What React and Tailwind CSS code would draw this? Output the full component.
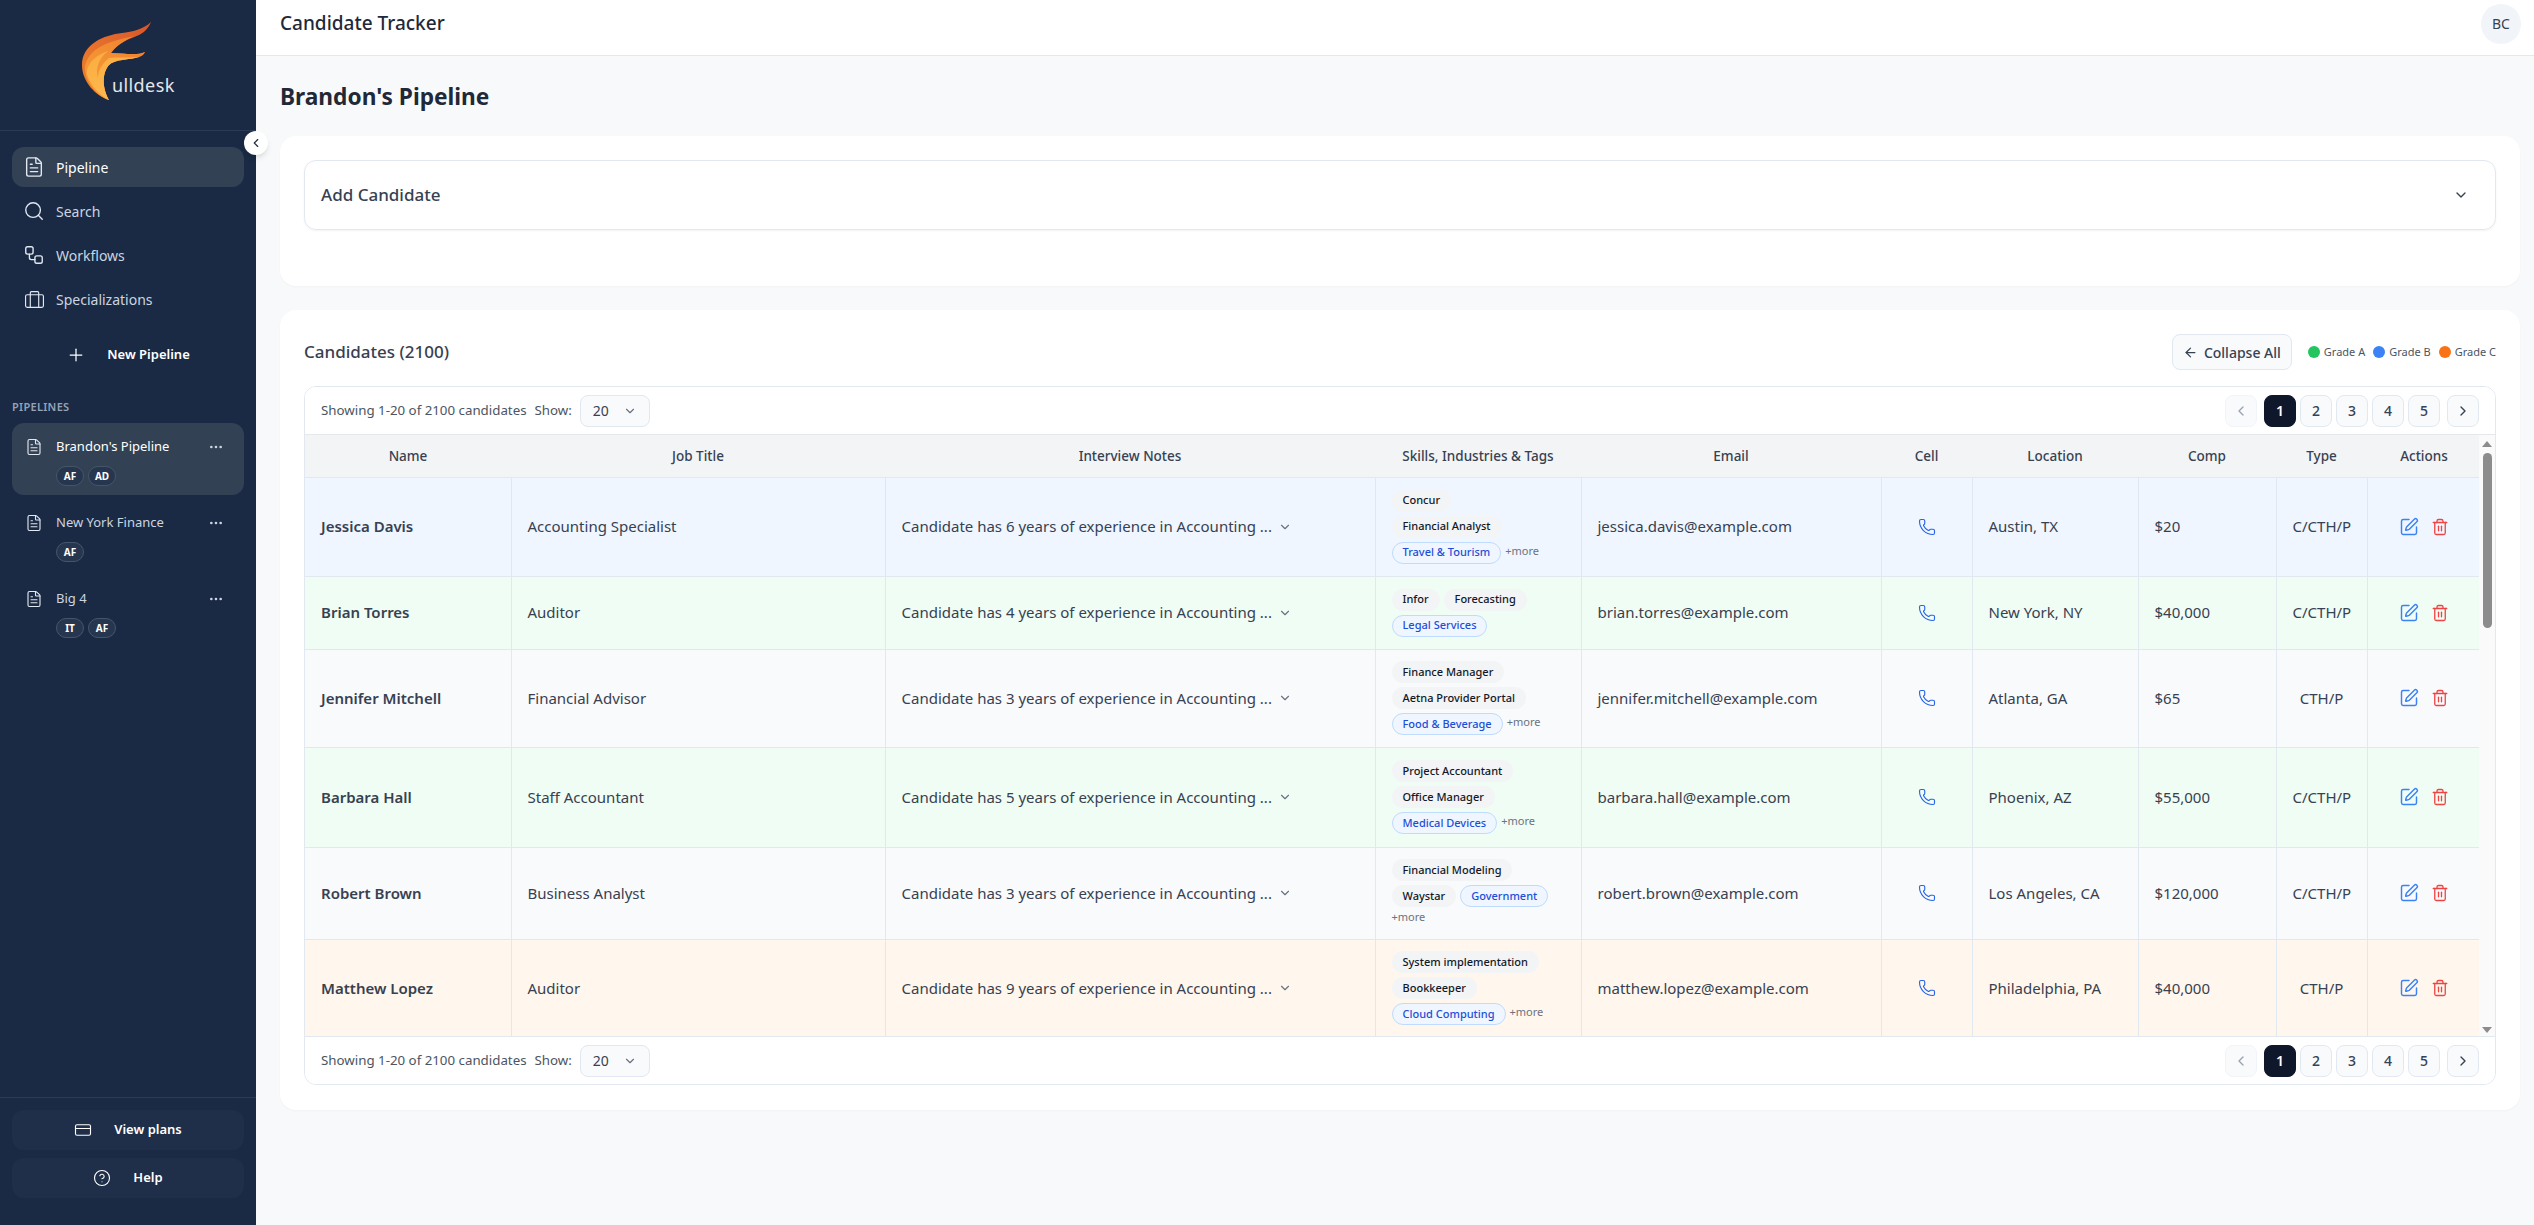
import { ArrowLeft, ChevronDown, ChevronLeft, ChevronRight, CircleHelp, CreditCard, FileText, MoreHorizontal, Phone, Plus, Search, SquarePen, Trash2, Workflow } from 'lucide-react';

const FONT = 'font-["Noto_Sans","Open_Sans",sans-serif]';

const COLUMNS = [
    ['Name', 'w-[206px]'],
    ['Job Title', 'w-[374px]'],
    ['Interview Notes', 'w-[490px]'],
    ['Skills, Industries & Tags', 'w-[206px]'],
    ['Email', 'w-[300px]'],
    ['Cell', 'w-[91px]'],
    ['Location', 'w-[166px]'],
    ['Comp', 'w-[138px]'],
    ['Type', 'w-[91px]'],
    ['Actions', 'w-[114px]'],
];

const ROWS = [
    { name: 'Jessica Davis', title: 'Accounting Specialist', years: 6, skills: ['Concur', 'Financial Analyst'], industry: 'Travel & Tourism', more: true, email: 'jessica.davis@example.com', location: 'Austin, TX', comp: '$20', type: 'C/CTH/P', bg: 'bg-[#eff6ff]', h: 'h-[99px]' },
    { name: 'Brian Torres', title: 'Auditor', years: 4, skills: ['Infor', 'Forecasting'], industry: 'Legal Services', email: 'brian.torres@example.com', location: 'New York, NY', comp: '$40,000', type: 'C/CTH/P', bg: 'bg-[#f0fdf4]', h: 'h-[73px]' },
    { name: 'Jennifer Mitchell', title: 'Financial Advisor', years: 3, skills: ['Finance Manager', 'Aetna Provider Portal'], industry: 'Food & Beverage', more: true, email: 'jennifer.mitchell@example.com', location: 'Atlanta, GA', comp: '$65', type: 'CTH/P', bg: 'bg-[#f9fafc]', h: 'h-[98px]' },
    { name: 'Barbara Hall', title: 'Staff Accountant', years: 5, skills: ['Project Accountant', 'Office Manager'], industry: 'Medical Devices', more: true, email: 'barbara.hall@example.com', location: 'Phoenix, AZ', comp: '$55,000', type: 'C/CTH/P', bg: 'bg-[#f0fdf4]', h: 'h-[100px]' },
    { name: 'Robert Brown', title: 'Business Analyst', years: 3, skills: ['Financial Modeling', 'Waystar'], industry: 'Government', more: true, email: 'robert.brown@example.com', location: 'Los Angeles, CA', comp: '$120,000', type: 'C/CTH/P', bg: 'bg-[#f9fafc]', h: 'h-[92px]' },
    { name: 'Matthew Lopez', title: 'Auditor', years: 9, skills: ['System implementation', 'Bookkeeper'], industry: 'Cloud Computing', more: true, email: 'matthew.lopez@example.com', location: 'Philadelphia, PA', comp: '$40,000', type: 'CTH/P', bg: 'bg-[#fff7ed]', h: 'h-[98px]' },
];

const PIPELINES = [
    { name: "Brandon's Pipeline", tags: ['AF', 'AD'], active: true },
    { name: 'New York Finance', tags: ['AF'] },
    { name: 'Big 4', tags: ['IT', 'AF'] },
];

// ── Logo flame, the rest of the word is real text ───────────────
function Logo() {
    return (
        <div className="relative w-[92px] h-[78px]">
            <svg viewBox="0 0 70 78" className="w-[70px] h-[78px]">
                <defs>
                    <linearGradient id="flameBack" x1="0" y1="0.6" x2="1" y2="0">
                        <stop offset="0" stopColor="#ea7a2c" />
                        <stop offset="1" stopColor="#d9552c" />
                    </linearGradient>
                    <linearGradient id="flameMid" x1="0" y1="1" x2="1" y2="0">
                        <stop offset="0" stopColor="#f7a037" />
                        <stop offset="1" stopColor="#ee7f30" />
                    </linearGradient>
                    <linearGradient id="flameFront" x1="0" y1="0" x2="0.5" y2="1">
                        <stop offset="0" stopColor="#fbab3f" />
                        <stop offset="1" stopColor="#fdbb50" />
                    </linearGradient>
                </defs>
                <path fill="url(#flameBack)" d="M69 0C62 7 50 10 40 11 22 13 0 22 0 43 0 60 14 74 27 78 21 68 19 52 27 43 33 37 47 38 57 35 60 34 62 32 63 30 54 34 42 31 29 31 36 20 48 17 57 13 63 10 67 5 69 0Z" />
                <path fill="url(#flameMid)" d="M52 14C36 18 8 22 3 44 2 58 14 74 27 78 21 68 19 52 27 43 33 37 47 38 57 35 60 34 62 32 63 30 54 34 42 31 29 31 36 22 44 18 52 14Z" />
                <path fill="url(#flameFront)" d="M26 29C14 33 4 42 5 52 8 64 19 74 27 78 21 68 19 52 27 43 33 37 47 38 57 35 48 36 34 35 27 36 22 40 16 47 16 56 13 46 17 36 26 29Z" />
            </svg>
            <span className="absolute left-[30px] bottom-[3px] text-[18px] leading-6 font-normal tracking-[0.4px] text-[#e5e7eb]">ulldesk</span>
        </div>
    );
}

function SpecializationsIcon() {
    return (
        <svg viewBox="0 0 20 20" fill="none" stroke="currentColor" strokeWidth="1.1" strokeLinejoin="round" className="w-[21px] h-[21px] shrink-0">
            <rect x="1.5" y="5.5" width="17" height="12" rx="1.5" />
            <path d="M6 17.5V3.5a1 1 0 0 1 1-1h6a1 1 0 0 1 1 1v14" />
        </svg>
    );
}

function NavItem({ icon, label, active }) {
    return (
        <div className={`flex items-center gap-3 h-10 px-3 rounded-xl text-[14px] ${active ? 'bg-[#334155] text-white' : 'text-[#cbd5e1]'}`}>
            <span className="w-5 flex justify-center text-[#e2e8f0]">{icon}</span>
            {label}
        </div>
    );
}

function PipelineItem({ pipeline }) {
    return (
        <div className={`h-[72px] px-3 pt-3 rounded-xl ${pipeline.active ? 'bg-[#334155]' : ''}`}>
            <div className="flex items-center h-6">
                <span className="w-[18px] ml-[1px] mr-[13px] text-[#e2e8f0]"><FileText size={18} strokeWidth={1.5} /></span>
                <span className={`flex-1 text-[13px] ${pipeline.active ? 'text-white' : 'text-[#cbd5e1]'}`}>{pipeline.name}</span>
                <MoreHorizontal size={16} className="text-[#cbd5e1] mr-2" />
            </div>
            <div className="flex gap-1 mt-[7px] ml-8">
                {pipeline.tags.map(t => (
                    <span key={t} className="w-7 h-5 flex items-center justify-center rounded-full border border-[#475569] bg-[#27364f] text-[10px] font-bold text-white">{t}</span>
                ))}
            </div>
        </div>
    );
}

function Sidebar() {
    return (
        <aside className="relative w-64 h-screen shrink-0 flex flex-col bg-[#1a2a44]">
            <div className="h-[131px] flex items-start justify-center pt-[22px] border-b border-[#2b3b55]">
                <Logo />
            </div>
            <button className="absolute left-[244px] top-[131px] w-6 h-6 rounded-full bg-white shadow-md flex items-center justify-center text-[#1f2937]">
                <ChevronLeft size={14} />
            </button>
            <nav className="px-3 pt-4 flex flex-col gap-1">
                <NavItem active icon={<FileText size={22} strokeWidth={1.5} className="shrink-0" />} label="Pipeline" />
                <NavItem icon={<Search size={22} strokeWidth={1.5} className="shrink-0" />} label="Search" />
                <NavItem icon={<Workflow size={22} strokeWidth={1.5} className="shrink-0" />} label="Workflows" />
                <NavItem icon={<SpecializationsIcon />} label="Specializations" />
            </nav>
            <div className="mt-4 mx-3 h-10 flex items-center justify-center gap-[21px] text-[13px] font-semibold text-white">
                <Plus size={20} strokeWidth={1.5} />
                New Pipeline
            </div>
            <div className="mt-[24px] px-3 h-[16px] leading-4 text-[11px] font-semibold tracking-[0.3px] text-[#94a3b8]">PIPELINES</div>
            <div className="mt-2 px-3 flex flex-col gap-1">
                {PIPELINES.map(p => <PipelineItem key={p.name} pipeline={p} />)}
            </div>
            <div className="mt-auto border-t border-[#2b3b55] px-3 pt-3 pb-[27px] flex flex-col gap-2">
                <div className="h-10 rounded-xl bg-[#1f2e49] flex items-center justify-center gap-[22px] text-[13px] font-semibold text-white">
                    <CreditCard size={18} strokeWidth={1.5} /> View plans
                </div>
                <div className="h-10 rounded-xl bg-[#1f2e49] flex items-center justify-center gap-[22px] text-[13px] font-semibold text-white">
                    <CircleHelp size={18} strokeWidth={1.5} /> Help
                </div>
            </div>
        </aside>
    );
}

function PageButton({ children, active, disabled, className = '' }) {
    const look = active
        ? 'bg-[#0f172a] text-white border-[#0f172a] font-semibold'
        : disabled
            ? 'bg-[#f9fafb] border-[#f1f5f9] text-[#9ca3af]'
            : 'bg-[#f8fafc] border-[#e2e8f0] text-[#374151] font-medium';
    return <button className={`w-8 h-8 rounded-lg border flex items-center justify-center text-[14px] ${look} ${className}`}>{children}</button>;
}

function Toolbar({ border }) {
    return (
        <div className={`h-12 flex items-center justify-between px-4 bg-white ${border}`}>
            <div className="flex items-center text-[13.3px] text-[#4b5563]">
                <span>Showing 1-20 of 2100 candidates</span>
                <span className="ml-2">Show:</span>
                <div className="ml-2 w-[70px] h-8 rounded-lg border border-[#e2e8f0] bg-[#f8fafc] flex items-center justify-between pl-3 pr-3 text-[14px] text-[#374151]">
                    20 <ChevronDown size={14} className="text-[#6b7280]" />
                </div>
            </div>
            <div className="flex items-center">
                <PageButton disabled className="mr-[7px]"><ChevronLeft size={16} /></PageButton>
                <div className="flex gap-1">
                    <PageButton active>1</PageButton>
                    <PageButton>2</PageButton>
                    <PageButton>3</PageButton>
                    <PageButton>4</PageButton>
                    <PageButton>5</PageButton>
                </div>
                <PageButton className="ml-[7px]"><ChevronRight size={16} /></PageButton>
            </div>
        </div>
    );
}

function Tag({ children, blue }) {
    return (
        <span className={`h-[22px] px-2.5 flex items-center rounded-full border whitespace-nowrap text-[11px] font-medium ${blue ? 'bg-[#eff6ff] border-[#bfdbfe] text-[#1d4ed8]' : 'bg-[#f3f4f6] border-transparent text-[#111827]'}`}>{children}</span>
    );
}

function CandidateRow({ row }) {
    const cell = `border-r border-[#e2e8f0] px-4 ${row.h}`;
    return (
        <tr className={`${row.bg} border-b border-[#e2e8f0] text-[15px] text-[#374151]`}>
            <td className={`${cell} font-semibold`}>{row.name}</td>
            <td className={cell}>{row.title}</td>
            <td className={cell}>
                <div className="flex items-center gap-1.5">
                    <span className="whitespace-nowrap">Candidate has {row.years} years of experience in Accounting ...</span>
                    <ChevronDown size={14} className="text-[#6b7280] shrink-0" />
                </div>
            </td>
            <td className={`${cell} py-0`}>
                <div className="flex flex-wrap gap-x-1 gap-y-1 items-center">
                    {row.skills.map(s => <Tag key={s}>{s}</Tag>)}
                    <Tag blue>{row.industry}</Tag>
                    {row.more && <span className="text-[11px] leading-3 pb-1 text-[#6b7280]">+more</span>}
                </div>
            </td>
            <td className={cell}>{row.email}</td>
            <td className={cell}><Phone size={18} strokeWidth={1.5} className="mx-auto text-[#2563eb]" /></td>
            <td className={cell}>{row.location}</td>
            <td className={cell}>{row.comp}</td>
            <td className={`${cell} text-center`}>{row.type}</td>
            <td className={`${row.h} px-4`}>
                <div className="flex items-center justify-center gap-3">
                    <SquarePen size={20} strokeWidth={1.75} className="text-[#3b82f6]" />
                    <Trash2 size={18} strokeWidth={1.75} className="text-[#ef4444]" />
                </div>
            </td>
        </tr>
    );
}

function Scrollbar() {
    return (
        <div className="w-4 flex flex-col items-center bg-[#fafafa]">
            <div className="mt-[6px] w-0 h-0 border-x-[5px] border-x-transparent border-b-[6px] border-b-[#8c8c8c]" />
            <div className="mt-[6px] w-[9px] h-[175px] rounded-full bg-[#8c8c8c]" />
            <div className="mt-auto mb-[3px] w-0 h-0 border-x-[5px] border-x-transparent border-t-[6px] border-t-[#8c8c8c]" />
        </div>
    );
}

function Legend({ dot, label }) {
    return (
        <span className="flex items-center gap-1 text-[11px] text-[#4b5563]">
            <span className={`w-3 h-3 rounded-full ${dot}`} />{label}
        </span>
    );
}

function CandidateTable() {
    return (
        <div className="rounded-xl border border-[#e2e8f0] overflow-hidden bg-white">
            <Toolbar border="border-b border-[#e5e7eb]" />
            <div className="flex">
                <div className="w-[2174px] h-[601px] overflow-hidden">
                    <table className="table-fixed w-[2176px] border-collapse">
                        <colgroup>{COLUMNS.map(([name, w]) => <col key={name} className={w} />)}</colgroup>
                        <thead>
                            <tr className="h-[42px] bg-[#f3f4f6] border-b border-[#e2e8f0]">
                                {COLUMNS.map(([name]) => <th key={name} className="px-4 text-center text-[13.5px] font-medium text-[#374151]">{name}</th>)}
                            </tr>
                        </thead>
                        <tbody>{ROWS.map(r => <CandidateRow key={r.name} row={r} />)}</tbody>
                    </table>
                </div>
                <Scrollbar />
            </div>
            <Toolbar border="border-t border-[#e2e8f0]" />
        </div>
    );
}

export default function App() {
    return (
        <div className={`flex h-screen overflow-hidden bg-[#f8f9fb] ${FONT}`}>
            <Sidebar />
            <main className="flex-1 min-w-0">
                <header className="h-[56px] flex items-center justify-between pl-6 pr-[13px] pb-[8px] bg-white border-b border-[#e5e7eb]">
                    <h1 className="text-[19px] font-medium text-[#1f2937]">Candidate Tracker</h1>
                    <div className="w-10 h-10 rounded-full bg-[#f1f5f9] flex items-center justify-center text-[14px] text-[#374151]">BC</div>
                </header>
                <div className="pl-6 pr-[14px] pt-[25px]">
                    <h2 className="h-[32px] leading-8 text-[22.7px] font-bold text-[#1f2937]">Brandon's Pipeline</h2>
                    <section className="mt-[23px] h-[150px] rounded-2xl bg-white p-6 shadow-[0_1px_2px_rgba(0,0,0,0.03)]">
                        <div className="h-[70px] rounded-xl border border-[#e2e8f0] shadow-[0_1px_2px_rgba(0,0,0,0.05)] flex items-center justify-between px-4">
                            <span className="text-[17px] font-medium text-[#374151]">Add Candidate</span>
                            <ChevronDown size={16} className="mr-[10px] text-[#374151]" />
                        </div>
                    </section>
                    <section className="mt-6 h-[800px] rounded-2xl bg-white px-6 pt-6 shadow-[0_1px_2px_rgba(0,0,0,0.03)]">
                        <div className="h-9 flex items-center justify-between mb-4">
                            <h3 className="text-[17px] font-medium text-[#374151]">Candidates (2100)</h3>
                            <div className="flex items-center">
                                <button className="h-9 w-[120px] rounded-lg border border-[#e2e8f0] bg-[#f8fafc] flex items-center justify-center gap-1.5 text-[14px] font-medium text-[#374151]">
                                    <ArrowLeft size={15} /> Collapse All
                                </button>
                                <div className="ml-4 flex items-center gap-2">
                                    <Legend dot="bg-[#22c55e]" label="Grade A" />
                                    <Legend dot="bg-[#3b82f6]" label="Grade B" />
                                    <Legend dot="bg-[#f97316]" label="Grade C" />
                                </div>
                            </div>
                        </div>
                        <CandidateTable />
                    </section>
                </div>
            </main>
        </div>
    );
}
